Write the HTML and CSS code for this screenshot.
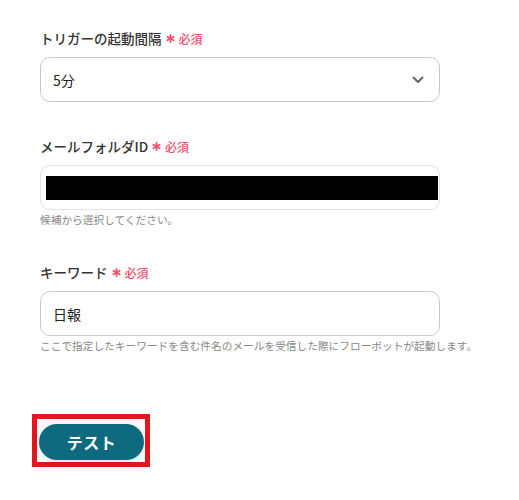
FILE: index.html
```html
<!DOCTYPE html>
<html lang="ja">
<head>
<meta charset="utf-8">
<link rel="stylesheet" href="styles.css">
</head>
<body>
<div class="form">
  <div class="field first">
    <div class="label">トリガーの起動間隔<span class="req"><svg class="star" viewBox="0 0 10 10"><g stroke="currentColor" stroke-width="2" stroke-linecap="round"><line x1="5" y1="1" x2="5" y2="9"/><line x1="1.5" y1="3" x2="8.5" y2="7"/><line x1="1.5" y1="7" x2="8.5" y2="3"/></g></svg>必須</span></div>
    <div class="box select">
      <span class="value">5分</span>
      <svg class="chev" viewBox="0 0 12 8"><path d="M1.5 1.5 L6 6 L10.5 1.5" fill="none" stroke="currentColor" stroke-width="2" stroke-linecap="round" stroke-linejoin="round"/></svg>
    </div>
  </div>
  <div class="field">
    <div class="label">メールフォルダID<span class="req"><svg class="star" viewBox="0 0 10 10"><g stroke="currentColor" stroke-width="2" stroke-linecap="round"><line x1="5" y1="1" x2="5" y2="9"/><line x1="1.5" y1="3" x2="8.5" y2="7"/><line x1="1.5" y1="7" x2="8.5" y2="3"/></g></svg>必須</span></div>
    <div class="box light">
      <div class="redact"></div>
    </div>
    <div class="hint">候補から選択してください。</div>
  </div>
  <div class="field">
    <div class="label">キーワード<span class="req"><svg class="star" viewBox="0 0 10 10"><g stroke="currentColor" stroke-width="2" stroke-linecap="round"><line x1="5" y1="1" x2="5" y2="9"/><line x1="1.5" y1="3" x2="8.5" y2="7"/><line x1="1.5" y1="7" x2="8.5" y2="3"/></g></svg>必須</span></div>
    <div class="box">
      <span class="value">日報</span>
    </div>
    <div class="hint">ここで指定したキーワードを含む件名のメールを受信した際にフローボットが起動します。</div>
  </div>
  <div class="actions">
    <div class="highlight">
      <button class="btn">テスト</button>
    </div>
  </div>
</div>
</body>
</html>
```

FILE: styles.css
```css
* { box-sizing: border-box; }
html, body {
  margin: 0;
  padding: 0;
  background: #fff;
}
body {
  font-family: "Noto Sans CJK JP", "Noto Sans", sans-serif;
  color: #333;
}
.form {
  padding: 28px 0 0 40px;
  width: 500px;
}
.field {
  margin-top: 34px;
}
.field.first {
  margin-top: 0;
}
.label {
  display: flex;
  align-items: center;
  height: 20px;
  font-size: 13.5px;
  font-weight: 500;
  color: #333;
  margin-bottom: 9px;
}
.req {
  display: inline-flex;
  align-items: center;
  color: #f0506e;
  font-size: 12px;
  font-weight: 500;
  margin-left: 4px;
}
.star {
  width: 9px;
  height: 9px;
  margin-right: 4px;
}
.box {
  width: 400px;
  height: 45px;
  border: 1px solid #c8c8c8;
  border-radius: 10px;
  display: flex;
  align-items: center;
  padding: 0 13px 0 12px;
}
.box.light {
  border-color: #e2e2e2;
  padding: 0 1px 0 5px;
}
.select {
  justify-content: space-between;
}
.value {
  font-size: 14px;
  color: #222;
}
.chev {
  width: 12px;
  height: 8px;
  color: #666;
  margin-right: 2px;
}
.redact {
  width: 392px;
  height: 24px;
  background: #000;
}
.hint {
  margin-top: 2px;
  font-size: 10.7px;
  line-height: 16px;
  color: #888;
  white-space: nowrap;
}
.actions {
  margin-top: 60px;
  margin-left: -8px;
}
.highlight {
  display: inline-block;
  border: 5px solid #e4161f;
  padding: 5px 1px 2px 2px;
}
.btn {
  display: block;
  width: 105px;
  height: 36px;
  border: none;
  border-radius: 18px;
  background: #0e6a7f;
  color: #fff;
  font-family: "Noto Sans CJK JP", "Noto Sans", sans-serif;
  font-size: 16px;
  font-weight: 700;
  letter-spacing: 0.5px;
  box-shadow: 0 2px 8px rgba(0, 0, 0, 0.12);
  cursor: pointer;
}
```
